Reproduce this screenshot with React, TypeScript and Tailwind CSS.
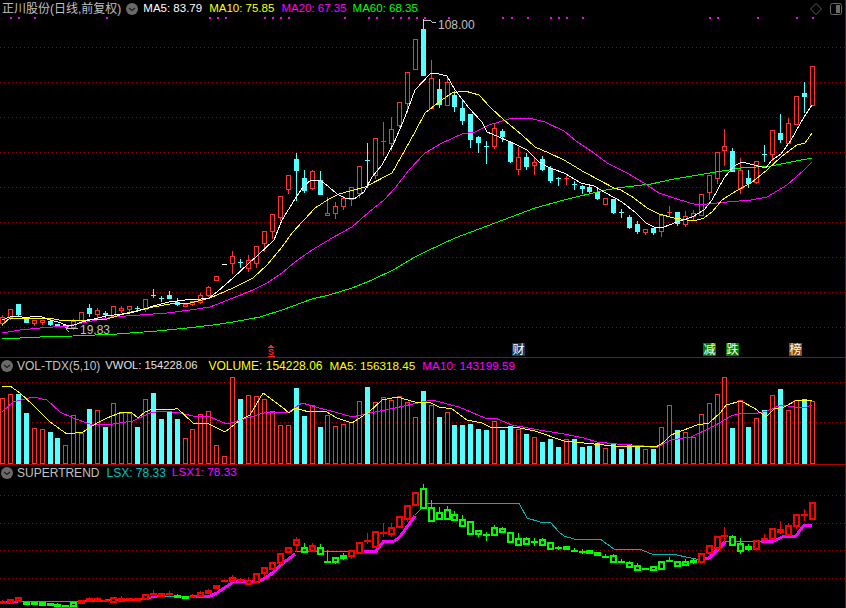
import { ReactNode } from 'react'

type Color = 'r' | 'c' | 'g'
// hi, body top, body bottom, lo, colour (page pixel coordinates)
type Candle = [number, number, number, number, Color]
type Point = [number, number]

const RED = '#ff3232'
const CYAN = '#54ffff'

const xAt = (i: number) => Math.floor(2.4 + i * 7.94)
const pts = (line: Point[]) => line.map(([x, y]) => `${x},${y}`).join(' ')

const mainCandles: Candle[] = [
  [315, 317, 323, 325, 'r'], [309, 309, 317, 319, 'r'], [304, 304, 314, 316, 'c'], [319, 319, 322, 322, 'c'],
  [320, 320, 323, 325, 'r'], [320, 320, 322, 324, 'r'], [319, 321, 324, 325, 'c'], [324, 324, 326, 326, 'c'],
  [325, 325, 326, 327, 'c'], [319, 321, 327, 329, 'r'], [312, 312, 320, 322, 'r'], [304, 308, 313, 316, 'c'],
  [308, 310, 314, 317, 'r'], [311, 313, 314, 317, 'c'], [306, 306, 316, 317, 'r'], [306, 308, 310, 312, 'r'],
  [306, 306, 309, 311, 'r'], [306, 308, 308, 310, 'c'], [299, 299, 309, 311, 'r'], [289, 295, 295, 297, 'c'],
  [296, 298, 298, 301, 'c'], [291, 295, 298, 298, 'c'], [298, 302, 304, 305, 'c'], [304, 304, 306, 306, 'r'],
  [301, 301, 304, 305, 'r'], [293, 295, 302, 303, 'r'], [286, 287, 295, 296, 'r'], [276, 276, 280, 280, 'r'],
  [264, 264, 264, 264, 'w' as Color], [251, 256, 263, 273, 'r'], [259, 262, 262, 267, 'c'], [255, 260, 268, 271, 'r'],
  [246, 246, 263, 267, 'r'], [231, 231, 243, 251, 'r'], [214, 214, 231, 238, 'r'], [196, 196, 217, 220, 'r'],
  [175, 175, 189, 193, 'r'], [153, 159, 170, 200, 'c'], [170, 178, 190, 192, 'c'], [170, 171, 188, 189, 'r'],
  [171, 180, 194, 194, 'c'], [197, 213, 215, 215, 'r'], [202, 206, 213, 218, 'r'], [196, 198, 206, 209, 'r'],
  [187, 187, 199, 205, 'r'], [166, 166, 193, 197, 'r'], [143, 160, 160, 187, 'c'], [138, 138, 175, 178, 'r'],
  [122, 141, 141, 155, 'r'], [117, 129, 143, 150, 'r'], [102, 102, 125, 127, 'r'], [72, 72, 103, 112, 'r'],
  [39, 39, 69, 69, 'r'], [19, 29, 75, 75, 'c'], [60, 78, 108, 108, 'r'], [79, 89, 104, 107, 'c'],
  [77, 82, 105, 105, 'r'], [91, 95, 106, 111, 'c'], [100, 108, 120, 124, 'c'], [114, 114, 139, 147, 'c'],
  [136, 137, 142, 152, 'c'], [141, 146, 146, 163, 'c'], [123, 128, 146, 148, 'r'], [129, 131, 136, 141, 'c'],
  [142, 142, 161, 162, 'c'], [147, 157, 169, 174, 'r'], [153, 157, 166, 169, 'c'], [157, 162, 165, 174, 'r'],
  [156, 159, 169, 170, 'c'], [166, 168, 180, 182, 'c'], [177, 178, 178, 185, 'c'], [176, 178, 178, 184, 'r'],
  [181, 184, 184, 189, 'c'], [185, 186, 188, 193, 'c'], [185, 187, 191, 193, 'c'], [188, 192, 198, 199, 'c'],
  [198, 198, 204, 204, 'r'], [199, 199, 212, 213, 'c'], [209, 212, 212, 217, 'c'], [215, 217, 227, 228, 'c'],
  [221, 224, 231, 233, 'c'], [229, 229, 232, 234, 'r'], [228, 228, 232, 234, 'c'], [215, 215, 231, 236, 'r'],
  [206, 212, 212, 215, 'r'], [212, 212, 223, 225, 'c'], [211, 216, 224, 226, 'r'], [210, 213, 216, 220, 'r'],
  [194, 194, 215, 215, 'r'], [175, 175, 192, 199, 'r'], [152, 152, 178, 183, 'r'], [129, 146, 150, 165, 'r'],
  [148, 151, 171, 171, 'c'], [158, 170, 188, 193, 'r'], [170, 178, 183, 187, 'c'], [161, 161, 182, 183, 'r'],
  [145, 154, 154, 161, 'c'], [130, 130, 154, 160, 'r'], [114, 133, 139, 142, 'c'], [118, 123, 143, 143, 'r'],
  [96, 96, 124, 124, 'r'], [82, 93, 96, 112, 'c'], [66, 66, 105, 105, 'r'],
]

const ma5: Point[] = [[2, 320], [10, 317], [18, 316], [26, 318], [34, 316], [42, 317], [50, 320], [58, 322], [66, 325], [74, 325], [82, 322], [90, 320], [98, 318], [106, 316], [114, 315], [122, 314], [130, 313], [145, 309], [153, 306], [169, 302], [185, 300], [201, 299], [209, 298], [217, 292], [233, 278], [249, 263], [257, 256], [274, 240], [282, 220], [295, 199], [303, 187], [311, 180], [320, 180], [329, 187], [337, 194], [345, 198], [354, 199], [364, 192], [372, 177], [382, 165], [394, 143], [405, 117], [415, 90], [430, 74], [435, 73], [447, 76], [455, 90], [469, 108], [482, 122], [487, 132], [499, 137], [515, 144], [527, 150], [539, 162], [550, 168], [564, 173], [581, 183], [594, 186], [606, 193], [622, 202], [636, 213], [646, 223], [654, 227], [664, 227], [677, 222], [692, 217], [704, 210], [712, 200], [724, 178], [734, 166], [742, 162], [754, 165], [766, 168], [772, 160], [781, 154], [791, 140], [804, 117], [812, 105]]
const ma10: Point[] = [[2, 325], [10, 318], [25, 318], [50, 318], [63, 321], [87, 320], [107, 319], [127, 313], [153, 307], [170, 304], [190, 303], [210, 298], [233, 288], [253, 278], [267, 265], [282, 247], [292, 233], [304, 220], [315, 208], [329, 199], [339, 194], [365, 187], [392, 173], [405, 150], [415, 132], [425, 113], [439, 102], [452, 93], [465, 91], [479, 95], [490, 107], [504, 120], [522, 135], [535, 147], [549, 153], [564, 160], [584, 172], [599, 180], [614, 188], [621, 190], [634, 198], [647, 208], [659, 214], [674, 218], [694, 221], [704, 218], [712, 212], [722, 200], [736, 191], [751, 183], [767, 170], [781, 157], [797, 145], [805, 143], [812, 133]]
const ma20: Point[] = [[2, 333], [20, 330], [40, 328], [67, 326], [87, 322], [113, 317], [140, 315], [167, 313], [190, 310], [210, 307], [233, 298], [253, 290], [267, 283], [282, 273], [295, 262], [312, 250], [332, 238], [352, 227], [369, 212], [384, 200], [395, 188], [409, 170], [425, 153], [442, 143], [462, 134], [475, 132], [489, 125], [509, 119], [529, 118], [545, 122], [564, 131], [576, 141], [594, 153], [607, 163], [627, 173], [644, 183], [659, 193], [677, 199], [697, 205], [727, 202], [751, 200], [767, 197], [787, 185], [804, 170], [812, 162]]
const ma60: Point[] = [[2, 339], [20, 338], [40, 337], [73, 336], [117, 334], [157, 331], [187, 328], [213, 325], [233, 322], [260, 317], [282, 310], [312, 299], [329, 295], [352, 288], [372, 280], [395, 269], [415, 257], [425, 252], [455, 238], [495, 223], [535, 208], [564, 200], [601, 191], [617, 188], [651, 184], [674, 179], [704, 174], [741, 168], [771, 166], [791, 162], [812, 158]]

const topDots = [10, 18, 34, 106, 209, 217, 225, 264, 272, 280, 288, 344, 368, 376, 392, 400, 408, 416, 424, 448, 502, 511, 527, 550, 558, 566, 582, 709, 717, 757, 796, 812]

const volumes: [number, Color][] = [
  [398, 'r'], [394, 'r'], [394, 'c'], [413, 'c'], [428, 'r'], [429, 'r'], [432, 'c'], [438, 'c'], [445, 'r'], [415, 'r'],
  [433, 'r'], [409, 'c'], [410, 'r'], [427, 'c'], [403, 'r'], [413, 'r'], [413, 'r'], [427, 'c'], [399, 'r'], [393, 'c'],
  [419, 'c'], [412, 'c'], [419, 'c'], [438, 'r'], [429, 'r'], [414, 'r'], [411, 'r'], [445, 'r'], [456, 'r'], [377, 'r'],
  [399, 'c'], [395, 'r'], [396, 'r'], [399, 'r'], [411, 'r'], [425, 'r'], [425, 'r'], [388, 'c'], [416, 'c'], [405, 'r'],
  [427, 'c'], [415, 'r'], [426, 'r'], [424, 'r'], [422, 'r'], [401, 'r'], [387, 'c'], [402, 'r'], [397, 'r'], [400, 'r'],
  [396, 'r'], [402, 'r'], [417, 'r'], [391, 'c'], [405, 'r'], [417, 'c'], [412, 'r'], [425, 'c'], [425, 'c'], [424, 'c'],
  [429, 'c'], [430, 'c'], [421, 'r'], [430, 'c'], [426, 'c'], [429, 'r'], [434, 'c'], [437, 'r'], [442, 'c'], [439, 'c'],
  [447, 'c'], [439, 'r'], [439, 'c'], [447, 'c'], [446, 'c'], [443, 'c'], [448, 'r'], [444, 'c'], [449, 'c'], [444, 'c'],
  [446, 'c'], [449, 'r'], [449, 'c'], [427, 'r'], [405, 'r'], [430, 'c'], [432, 'r'], [437, 'r'], [414, 'r'], [403, 'r'],
  [394, 'r'], [377, 'r'], [428, 'c'], [400, 'r'], [427, 'c'], [418, 'r'], [410, 'c'], [395, 'r'], [389, 'c'], [410, 'r'],
  [400, 'r'], [399, 'c'], [401, 'r'],
]

const volFast: Point[] = [[2, 386], [10, 386], [20, 393], [33, 405], [50, 422], [67, 434], [83, 432], [97, 423], [107, 418], [122, 412], [132, 413], [138, 418], [145, 412], [153, 409], [173, 410], [177, 408], [193, 423], [207, 423], [225, 432], [240, 420], [250, 415], [263, 393], [282, 407], [289, 413], [295, 408], [309, 412], [325, 411], [337, 418], [352, 423], [369, 412], [382, 400], [397, 397], [415, 402], [429, 402], [439, 407], [452, 409], [467, 420], [482, 423], [490, 427], [515, 427], [535, 431], [564, 441], [584, 443], [594, 444], [614, 446], [644, 446], [656, 447], [664, 442], [671, 435], [697, 425], [709, 423], [721, 412], [726, 405], [741, 401], [754, 408], [766, 417], [774, 409], [784, 407], [797, 400], [812, 400]]
const volSlow: Point[] = [[2, 412], [13, 402], [33, 397], [47, 400], [60, 412], [73, 418], [90, 424], [113, 424], [133, 421], [150, 413], [163, 411], [180, 413], [193, 416], [210, 417], [227, 424], [247, 418], [267, 412], [282, 412], [289, 412], [302, 403], [319, 408], [335, 412], [352, 417], [375, 412], [395, 408], [422, 402], [432, 400], [459, 407], [485, 418], [495, 418], [512, 425], [539, 430], [564, 434], [584, 438], [597, 442], [617, 444], [644, 446], [656, 448], [671, 440], [691, 437], [714, 426], [731, 416], [741, 413], [754, 414], [767, 411], [781, 405], [794, 407], [804, 408], [812, 405]]

const trendCandles: Candle[] = [
  [600, 601, 602, 604, 'r'], [599, 599, 602, 603, 'r'], [597, 597, 600, 601, 'r'], [602, 602, 603, 603, 'g'],
  [602, 602, 603, 604, 'g'], [602, 602, 604, 604, 'g'], [603, 603, 604, 604, 'g'], [603, 604, 605, 605, 'g'],
  [605, 605, 605, 606, 'g'], [602, 602, 605, 605, 'g'], [600, 600, 602, 603, 'r'], [597, 598, 600, 601, 'r'],
  [597, 598, 600, 601, 'r'], [599, 600, 600, 602, 'r'], [597, 597, 601, 601, 'r'], [596, 598, 600, 601, 'r'],
  [598, 598, 599, 599, 'r'], [598, 598, 599, 599, 'r'], [594, 594, 598, 598, 'r'], [590, 593, 593, 594, 'r'],
  [593, 593, 595, 595, 'r'], [591, 593, 593, 596, 'r'], [594, 595, 596, 597, 'g'], [596, 596, 597, 598, 'g'],
  [594, 596, 596, 597, 'r'], [591, 592, 595, 596, 'r'], [589, 590, 592, 593, 'r'], [585, 585, 587, 587, 'r'],
  [580, 580, 580, 580, 'r'], [575, 577, 580, 582, 'r'], [578, 579, 580, 582, 'r'], [577, 580, 583, 584, 'r'],
  [573, 573, 581, 581, 'r'], [567, 567, 572, 577, 'r'], [562, 562, 568, 570, 'r'], [553, 553, 562, 565, 'r'],
  [547, 547, 551, 552, 'r'], [537, 539, 544, 552, 'r'], [543, 547, 551, 552, 'g'], [543, 545, 550, 552, 'r'],
  [544, 547, 553, 553, 'g'], [550, 561, 561, 561, 'g'], [557, 557, 561, 564, 'g'], [553, 555, 557, 560, 'g'],
  [550, 550, 555, 559, 'r'], [542, 542, 552, 554, 'r'], [533, 540, 540, 544, 'r'], [531, 531, 546, 548, 'r'],
  [523, 532, 532, 537, 'r'], [523, 527, 533, 537, 'r'], [516, 516, 526, 528, 'r'], [505, 505, 518, 522, 'r'],
  [492, 492, 504, 504, 'r'], [484, 488, 507, 507, 'g'], [500, 507, 520, 520, 'g'], [507, 512, 518, 519, 'g'],
  [506, 509, 518, 518, 'g'], [511, 514, 519, 521, 'g'], [515, 519, 525, 526, 'g'], [521, 521, 533, 535, 'g'],
  [530, 530, 533, 537, 'g'], [532, 534, 534, 541, 'g'], [525, 527, 534, 536, 'g'], [527, 528, 531, 533, 'g'],
  [532, 532, 541, 541, 'g'], [533, 538, 544, 546, 'g'], [537, 538, 543, 544, 'g'], [538, 541, 541, 546, 'g'],
  [538, 539, 544, 544, 'g'], [542, 542, 548, 549, 'g'], [546, 547, 547, 550, 'g'], [546, 546, 548, 550, 'g'],
  [548, 550, 550, 552, 'g'], [549, 551, 551, 554, 'g'], [550, 550, 552, 554, 'g'], [552, 552, 554, 556, 'g'],
  [554, 556, 556, 558, 'g'], [554, 555, 561, 561, 'g'], [559, 561, 561, 563, 'g'], [561, 562, 566, 566, 'g'],
  [563, 565, 569, 569, 'g'], [568, 568, 568, 570, 'g'], [566, 566, 569, 570, 'g'], [561, 561, 568, 570, 'g'],
  [557, 560, 560, 562, 'g'], [561, 561, 565, 566, 'g'], [559, 561, 564, 566, 'g'], [558, 560, 561, 564, 'g'],
  [553, 553, 561, 561, 'r'], [545, 545, 552, 557, 'r'], [536, 536, 547, 550, 'r'], [527, 535, 535, 542, 'r'],
  [535, 536, 544, 544, 'g'], [538, 543, 550, 554, 'g'], [544, 546, 548, 551, 'g'], [540, 540, 548, 550, 'r'],
  [534, 538, 538, 541, 'r'], [528, 528, 538, 540, 'r'], [521, 529, 531, 534, 'r'], [523, 525, 534, 534, 'r'],
  [514, 514, 525, 529, 'r'], [509, 514, 514, 521, 'r'], [502, 502, 518, 518, 'r'],
]

const trendLines: { color: string; width: number; line: Point[] }[] = [
  { color: '#ff00ff', width: 2, line: [[0, 602], [18, 602]] },
  { color: '#00b4b4', width: 1, line: [[18, 601], [78, 601]] },
  { color: '#ff00ff', width: 2, line: [[80, 601], [133, 600], [148, 599], [152, 597], [163, 596]] },
  { color: '#00b4b4', width: 1, line: [[163, 596], [190, 596]] },
  { color: '#ff00ff', width: 3, line: [[190, 596], [210, 596], [217, 593], [233, 582], [260, 581], [270, 575], [282, 564], [295, 554]] },
  { color: '#00b4b4', width: 1, line: [[295, 552], [355, 551]] },
  { color: '#ff00ff', width: 3, line: [[364, 551], [376, 551], [384, 541], [394, 541], [399, 538], [415, 516]] },
  { color: '#00b4b4', width: 1, line: [[415, 515], [427, 503], [519, 503], [527, 518], [540, 522], [550, 522], [559, 532], [564, 536], [574, 539], [600, 539], [614, 549], [639, 549], [652, 554], [672, 554], [691, 558], [701, 560]] },
  { color: '#ff00ff', width: 3, line: [[702, 559], [709, 558], [725, 542]] },
  { color: '#00b4b4', width: 1, line: [[725, 542], [731, 541], [761, 541]] },
  { color: '#ff00ff', width: 3, line: [[761, 541], [774, 541], [782, 537], [796, 536], [804, 525], [812, 525]] },
]

function GridLines({ rows }: { rows: number[] }) {
  return (
    <>
      {rows.map((y) => (
        <line key={y} x1={0} x2={845} y1={y + 0.5} y2={y + 0.5} stroke="#a80000" strokeDasharray="1 3" />
      ))}
    </>
  )
}

function CollapseIcon() {
  return (
    <svg width="12" height="12" viewBox="0 0 12 12" className="shrink-0">
      <circle cx="6" cy="6" r="6" fill="#6a6a6a" />
      <path d="M3 5l3 2.5L9 5" fill="none" stroke="#1c1c1c" strokeWidth="1.2" />
    </svg>
  )
}

function PanelHeader({ children, className }: { children: ReactNode; className: string }) {
  return <div className={`flex shrink-0 items-center text-[12px] leading-none whitespace-nowrap ${className}`}>{children}</div>
}

function Tag({ x, label, color }: { x: number; label: string; color: string }) {
  return (
    <g>
      <rect x={x} y={343} width={13} height={13} fill={color} />
      <text x={x + 0.5} y={354} fontSize={12} fill="#fff">
        {label}
      </text>
    </g>
  )
}

function MainCandle({ candle, i }: { candle: Candle; i: number }) {
  const [hi, top, bottom, lo, color] = candle
  const px = xAt(i) + 0.5
  const stroke = (color as string) === 'w' ? '#ffffff' : color === 'r' ? RED : CYAN
  const isDoji = bottom - top < 1
  return (
    <g stroke={stroke}>
      <line x1={px} x2={px} y1={hi} y2={lo + 1} />
      {isDoji ? (
        <line x1={px - 2.5} x2={px + 2.5} y1={top + 0.5} y2={top + 0.5} />
      ) : (
        <rect x={px - 2} y={top + 0.5} width={4} height={bottom - top} fill={color === 'c' ? CYAN : '#000'} />
      )}
    </g>
  )
}

function TrendCandle({ candle, i }: { candle: Candle; i: number }) {
  const [hi, top, bottom, lo, color] = candle
  const px = xAt(i) + 0.5
  const stroke = color === 'r' ? '#ff0000' : '#00ff00'
  const isDoji = bottom - top < 1
  return (
    <g stroke={stroke}>
      <line x1={px} x2={px} y1={hi} y2={lo} />
      {isDoji ? (
        <line x1={px - 3.5} x2={px + 3.5} y1={top + 0.5} y2={top + 0.5} strokeWidth={2} />
      ) : (
        <rect x={px - 2.5} y={top + 1} width={5} height={bottom - top} fill="#000" strokeWidth={2} />
      )}
    </g>
  )
}

export default function App() {
  return (
    <div className="flex h-[608px] w-[846px] flex-col overflow-hidden border-r border-[#a80000] bg-black font-['Liberation_Sans','Noto_Sans_CJK_SC',sans-serif]">
      {/* K-line panel */}
      <section className="flex h-[358px] shrink-0 flex-col border-b border-[#b00000]">
        <PanelHeader className="h-[17px] pl-[2px] pr-[3px]">
          <span className="mr-[5px] text-[#c0c0c0]">正川股份(日线,前复权)</span>
          <CollapseIcon />
          <span className="ml-[5px] text-[11.5px] text-white">MA5: 83.79</span>
          <span className="ml-[7px] text-[11.5px] text-[#ffff00]">MA10: 75.85</span>
          <span className="ml-[7px] text-[11.5px] text-[#ff00ff]">MA20: 67.35</span>
          <span className="ml-[6px] text-[11.5px] text-[#00ff00]">MA60: 68.35</span>
          <svg width="14" height="14" viewBox="0 0 14 14" className="ml-auto mr-[7px]">
            <path d="M7 1.5L12.5 7 7 12.5 1.5 7z" fill="none" stroke="#5c5c5c" />
          </svg>
          <svg width="12" height="12" viewBox="0 0 12 12">
            <rect x="0.5" y="0.5" width="11" height="11" rx="2" fill="none" stroke="#6a6a6a" />
            <rect x="6" y="2" width="4" height="8" fill="#6a6a6a" />
          </svg>
        </PanelHeader>
        <svg width="845" height="340" viewBox="0 17 845 340" shapeRendering="crispEdges">
          <GridLines rows={[47, 82, 117, 152, 187, 222, 257, 292, 327]} />
          {topDots.map((x) => (
            <rect key={x} x={x} y={17} width={2} height={2} fill="#ff00ff" />
          ))}
          {mainCandles.map((candle, i) => (
            <MainCandle key={i} candle={candle} i={i} />
          ))}
          <polyline points={pts(ma60)} fill="none" stroke="#00ff00" />
          <polyline points={pts(ma20)} fill="none" stroke="#ff00ff" />
          <polyline points={pts(ma10)} fill="none" stroke="#ffff00" />
          <polyline points={pts(ma5)} fill="none" stroke="#ffffff" />

          <path d="M424 20.5H430L433 22.5L436 23" fill="none" stroke="#c0c0c0" />
          <text x={438} y={29} fontSize={12} fill="#c0c0c0" shapeRendering="auto">
            108.00
          </text>
          <path d="M78 328.5H66M66 328.5L69 326M66 328.5L69 332" fill="none" stroke="#c0c0c0" />
          <text x={80} y={334} fontSize={12} fill="#c0c0c0" shapeRendering="auto">
            19.83
          </text>

          <path d="M271 344.5L274 347.5H268z" fill="#ff2020" />
          <text x={268} y={355} fontSize={9} fontWeight={700} fill="#ff2020">
            S
          </text>
          <rect x={268} y={356} width={7} height={1} fill="#ff2020" />
          <Tag x={512} label="财" color="#0f3a66" />
          <Tag x={703} label="减" color="#007a00" />
          <Tag x={726} label="跌" color="#007a00" />
          <Tag x={789} label="榜" color="#8a4b10" />
        </svg>
      </section>

      {/* volume panel */}
      <section className="flex h-[107px] shrink-0 flex-col border-b border-[#b00000]">
        <PanelHeader className="h-[16px] pl-[1px]">
          <CollapseIcon />
          <span className="ml-[4px] text-[#c0c0c0]">VOL-TDX(5,10)</span>
          <span className="ml-[5px] text-[11.2px] text-[#e4e4e4]">VWOL: 154228.06</span>
          <span className="ml-[11px] text-[#ffff00]">VOLUME: 154228.06</span>
          <span className="ml-[7px] text-[11.7px] text-[#ffff00]">MA5: 156318.45</span>
          <span className="ml-[7px] text-[11.75px] text-[#ff00ff]">MA10: 143199.59</span>
        </PanelHeader>
        <svg width="845" height="90" viewBox="0 374 845 90" shapeRendering="crispEdges">
          <GridLines rows={[382, 422]} />
          {volumes.map(([top, color], i) => (
            <rect
              key={i}
              x={xAt(i) - 1.5}
              y={top + 0.5}
              width={4}
              height={463 - top}
              fill={color === 'c' ? CYAN : '#000'}
              stroke={color === 'c' ? CYAN : RED}
            />
          ))}
          <polyline points={pts(volSlow)} fill="none" stroke="#ff00ff" />
          <polyline points={pts(volFast)} fill="none" stroke="#ffff00" />
        </svg>
      </section>

      {/* supertrend panel */}
      <section className="flex min-h-0 flex-1 flex-col">
        <PanelHeader className="h-[16px] pl-[1px]">
          <CollapseIcon />
          <span className="ml-[4px] text-[#c0c0c0]">SUPERTREND</span>
          <span className="ml-[7px] text-[#00c0c0]">LSX: 78.33</span>
          <span className="ml-[6px] text-[11.8px] text-[#ff00ff]">LSX1: 78.33</span>
        </PanelHeader>
        <svg width="845" height="127" viewBox="0 481 845 127" shapeRendering="crispEdges">
          <GridLines rows={[495, 523, 550, 578]} />
          {trendLines.map((item, i) => (
            <polyline key={i} points={pts(item.line)} fill="none" stroke={item.color} strokeWidth={item.width} />
          ))}
          {trendCandles.map((candle, i) => (
            <TrendCandle key={i} candle={candle} i={i} />
          ))}
        </svg>
      </section>
    </div>
  )
}
